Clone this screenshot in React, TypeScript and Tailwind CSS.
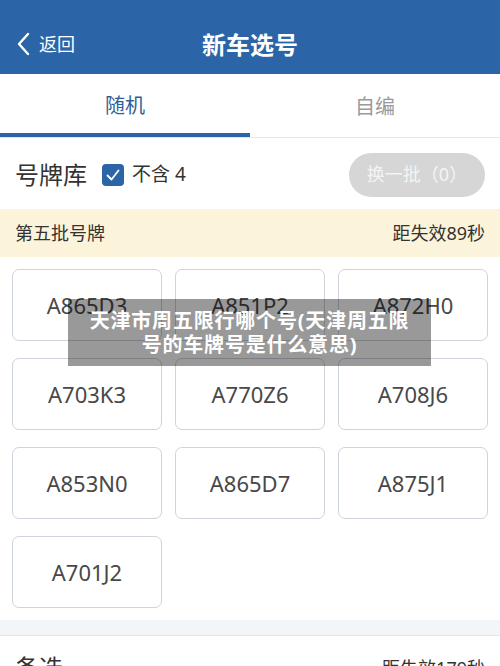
import React from 'react';

const PLATES = ['A865D3', 'A851P2', 'A872H0', 'A703K3', 'A770Z6', 'A708J6', 'A853N0', 'A865D7', 'A875J1', 'A701J2'];

const FONT = { fontFamily: '"Noto Sans", "Noto Sans CJK SC", sans-serif' };

export default function App() {
  return (
    <div className="relative w-[500px] h-[666px] overflow-hidden bg-white" style={FONT}>
      {/* 顶部导航 */}
      <div className="relative flex h-[74px] items-center bg-[#2c64a8] text-white">
        <div className="flex items-center pl-[15px] pt-[14px]">
          <svg width="18" height="24" viewBox="0 0 18 24" fill="none">
            <path d="M13 2 L4 12 L13 22" stroke="white" strokeWidth="2.4" strokeLinecap="round" strokeLinejoin="round" />
          </svg>
          <span className="ml-[6px] text-[18px] leading-none">返回</span>
        </div>
        <div className="absolute inset-x-0 top-[16px] bottom-0 flex items-center justify-center text-[24px] font-bold">新车选号</div>
      </div>

      {/* 标签页 */}
      <div className="flex h-[64px] border-b border-[#e6e6e6]">
        <div className="flex flex-1 flex-col">
          <div className="flex flex-1 items-center justify-center pt-[5px] text-[20px] text-[#2f5f98]">随机</div>
          <div className="h-[4px] bg-[#2c64a8]" />
        </div>
        <div className="flex flex-1 items-center justify-center pt-[2px] text-[20px] text-[#9a9a9a]">自编</div>
      </div>

      {/* 号牌库 */}
      <div className="flex h-[71px] items-center px-[15px] pt-[2px]">
        <span className="text-[24px] text-[#333]">号牌库</span>
        <div className="ml-[15px] flex h-[22px] w-[22px] items-center justify-center rounded-[4px] bg-[#2c64a8]">
          <svg width="16" height="16" viewBox="0 0 16 16" fill="none">
            <path d="M2.5 8.5 L6.5 12.5 L13.5 3.5" stroke="white" strokeWidth="1.8" strokeLinecap="round" strokeLinejoin="round" />
          </svg>
        </div>
        <span className="ml-[8px] text-[19px] text-[#333]">不含 4</span>
        <div className="ml-auto flex h-[44px] w-[136px] items-center justify-center rounded-full bg-[#d6d6d6] text-[18px] text-[#f4f4f4]">
          换一批（0）
        </div>
      </div>

      {/* 批次 */}
      <div className="flex h-[48px] items-center justify-between bg-[#fcf4da] px-[15px] text-[18px] text-[#333]">
        <span>第五批号牌</span>
        <span>距失效89秒</span>
      </div>

      {/* 号牌列表 */}
      <div className="grid grid-cols-3 gap-x-[13px] gap-y-[17px] px-[12px] pt-[12px] pb-[12px]">
        {PLATES.map((p) => (
          <div
            key={p}
            className="flex h-[72px] items-center justify-center rounded-[7px] border border-[#cdd4dc] text-[22px] text-[#484848]"
          >
            {p}
          </div>
        ))}
      </div>

      <div className="h-[16px] border-b border-[#e3e7ec] bg-[#f3f6f9]" />

      {/* 备选 */}
      <div className="flex items-center justify-between px-[15px] pt-[14px]">
        <span className="text-[24px] text-[#333]">备选</span>
        <span className="text-[18px] text-[#333]">距失效179秒</span>
      </div>

      {/* 标题水印 */}
      <div className="absolute left-[68px] top-[299px] flex h-[67px] w-[363px] flex-col items-center justify-center bg-black/40 text-center text-[20px] font-bold leading-[24px] tracking-[0.8px] text-white">
        <div>天津市周五限行哪个号(天津周五限</div>
        <div>号的车牌号是什么意思)</div>
      </div>
    </div>
  );
}
